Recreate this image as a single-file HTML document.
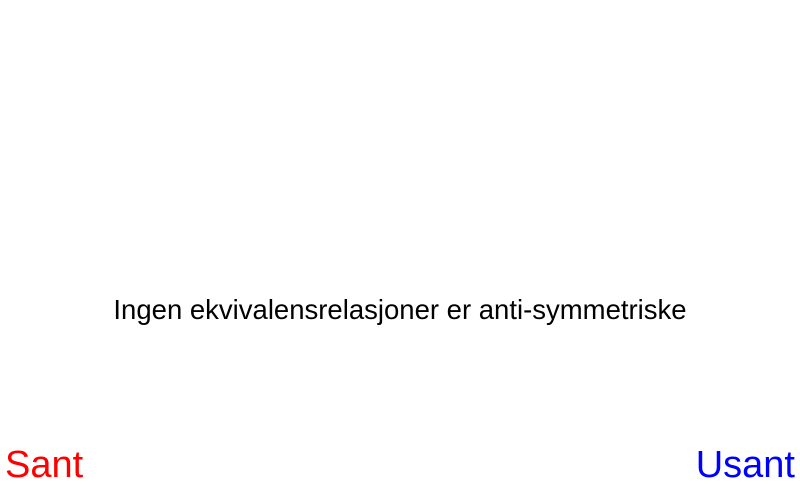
<!DOCTYPE html>
<html><head><meta charset="utf-8"><style>
html,body{margin:0;padding:0;background:#fff;}
body{width:800px;height:480px;position:relative;overflow:hidden;font-family:"Liberation Sans",sans-serif;}
#q{position:absolute;left:0;width:800px;top:292px;text-align:center;font-size:27.5px;color:#000;line-height:36px;}
#s{position:absolute;left:5px;top:441px;font-size:38px;color:#f00;line-height:48px;}
#u{position:absolute;right:5px;top:441px;font-size:38px;color:#00f;line-height:48px;}
</style></head><body>
<div id="q">Ingen ekvivalensrelasjoner er anti-symmetriske</div>
<div id="s">Sant</div>
<div id="u">Usant</div>
</body></html>
